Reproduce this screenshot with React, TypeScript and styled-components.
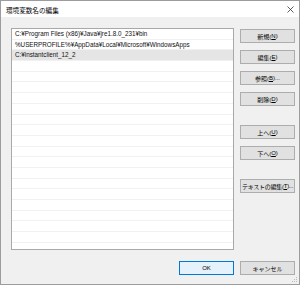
import React from 'react';
import styled, { createGlobalStyle } from 'styled-components';

const GlobalStyle = createGlobalStyle`
    html, body {
        margin: 0;
        padding: 0;
        background: #ffffff;
    }
    * {
        box-sizing: border-box;
    }
`;

const FONT = `"Liberation Sans", "Noto Sans CJK JP", sans-serif`;

const Window = styled.div`
    position: relative;
    width: 300px;
    height: 285px;
    border: 1px solid #9c9c9c;
    display: flex;
    flex-direction: column;
    font-family: ${FONT};
    color: #000;
    overflow: hidden;
`;

const TitleBar = styled.div`
    height: 16px;
    flex: 0 0 auto;
    background: #ffffff;
    display: flex;
    align-items: center;
    justify-content: space-between;
    padding: 1px 5px 0 5px;

    .title {
        font-size: 6.6px;
    }
`;

const Body = styled.div`
    flex: 1 1 auto;
    background: #f0f0f0;
    padding: 11px 4px 0 10px;
    display: flex;
    flex-direction: column;
`;

const Main = styled.div`
    display: flex;
    gap: 6px;
`;

const ListBox = styled.div`
    width: 223px;
    height: 222px;
    border: 1px solid #a9a9a9;
    background: #ffffff;
    overflow: hidden;
    display: flex;
    flex-direction: column;
`;

const Row = styled.div<{ selected?: boolean }>`
    flex: 0 0 10.7px;
    height: 10.7px;
    border-bottom: 1px solid #f1f1f1;
    background: ${props => props.selected ? '#e5e5e5' : '#ffffff'};
    padding-left: 3px;
    font-size: 6.3px;
    line-height: 10px;
    white-space: nowrap;
    color: #111;
`;

const ButtonColumn = styled.div`
    display: flex;
    flex-direction: column;
    gap: 7px;
    padding-top: 1px;
`;

const Button = styled.div<{ primary?: boolean; spaced?: boolean; compact?: boolean }>`
    width: 55px;
    height: 14px;
    margin-top: ${props => props.spaced ? '12px' : '0'};
    background: ${props => props.primary ? '#e5f1fb' : '#e1e1e1'};
    border: 1px solid ${props => props.primary ? '#0078d7' : '#adadad'};
    display: flex;
    align-items: center;
    justify-content: center;
    font-size: 6px;
    letter-spacing: ${props => props.compact ? '-0.25px' : '0'};
    white-space: nowrap;
    overflow: hidden;

    u {
        text-decoration: underline;
    }
`;

const Footer = styled.div`
    display: flex;
    justify-content: flex-end;
    gap: 6px;
    margin-top: 11px;
`;

const Grip = styled.svg`
    position: absolute;
    right: 1px;
    bottom: 1px;
`;

const paths = [
    'C:¥Program Files (x86)¥Java¥jre1.8.0_231¥bin',
    '%USERPROFILE%¥AppData¥Local¥Microsoft¥WindowsApps',
    'C:¥instantclient_12_2',
];

function App() {
    const rows = [...paths, ...Array(18).fill('')];
    return <>
        <GlobalStyle/>
        <Window>
            <TitleBar>
                <span className='title'>環境変数名の編集</span>
                <svg width='7' height='7' viewBox='0 0 7 7'>
                    <path d='M0.5 0.5 L6.5 6.5 M6.5 0.5 L0.5 6.5' stroke='#333' strokeWidth='0.8'/>
                </svg>
            </TitleBar>
            <Body>
                <Main>
                    <ListBox>
                        {rows.map((text, i) =>
                            <Row key={i} selected={i === 2}>{text}</Row>
                        )}
                    </ListBox>
                    <ButtonColumn>
                        <Button>新規(<u>N</u>)</Button>
                        <Button>編集(<u>E</u>)</Button>
                        <Button>参照(<u>B</u>)...</Button>
                        <Button>削除(<u>D</u>)</Button>
                        <Button spaced>上へ(<u>U</u>)</Button>
                        <Button>下へ(<u>O</u>)</Button>
                        <Button spaced compact>テキストの編集(<u>T</u>)...</Button>
                    </ButtonColumn>
                </Main>
                <Footer>
                    <Button primary>OK</Button>
                    <Button>キャンセル</Button>
                </Footer>
            </Body>
            <Grip width='6' height='6' viewBox='0 0 6 6'>
                <rect x='4' y='0' width='1' height='1' fill='#bcbcbc'/>
                <rect x='2' y='2' width='1' height='1' fill='#bcbcbc'/>
                <rect x='4' y='2' width='1' height='1' fill='#bcbcbc'/>
                <rect x='0' y='4' width='1' height='1' fill='#bcbcbc'/>
                <rect x='2' y='4' width='1' height='1' fill='#bcbcbc'/>
                <rect x='4' y='4' width='1' height='1' fill='#bcbcbc'/>
            </Grip>
        </Window>
    </>
}

export default App;
